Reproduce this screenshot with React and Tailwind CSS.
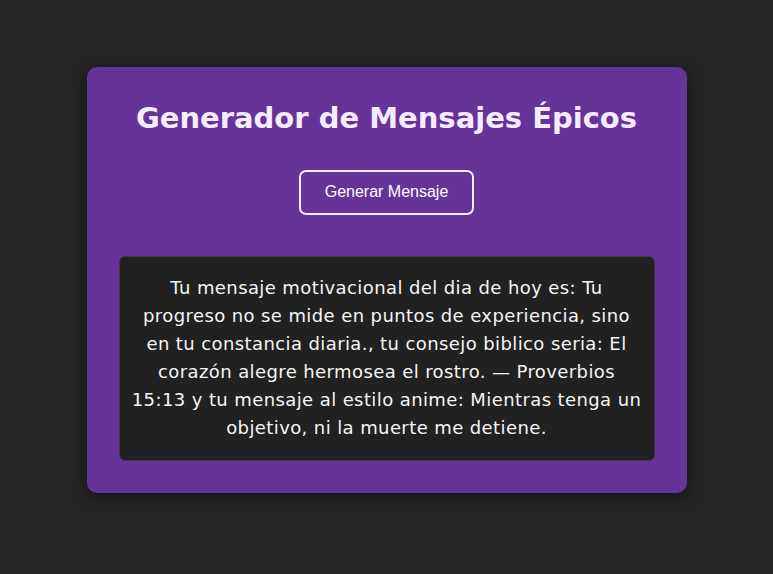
export default function App() {
  return (
    <div className="min-h-screen w-full bg-[#242424] flex justify-center pt-[67px]">
      <div className="w-[600px] h-[426px] bg-[#663399] rounded-[10px] shadow-[0_4px_16px_rgba(0,0,0,0.45)] p-8 flex flex-col items-center">
        <h1 className="text-[29px] leading-[38px] font-semibold text-[#f5ecff] text-center font-['DejaVu_Sans',sans-serif]">
          Generador de Mensajes Épicos
        </h1>
        <button className="mt-[33px] w-[175px] h-[45px] border-2 border-[#f5f0ff] rounded-[7px] text-white text-[16px] bg-transparent font-['Liberation_Sans',Arial,sans-serif]">
          Generar Mensaje
        </button>
        <div className="mt-[41px] w-[536px] h-[206px] bg-[#212121] rounded-[6px] border border-[#3a3a3a] px-3 flex items-center justify-center">
          <p className="text-[18px] leading-[28px] tracking-[0.4px] text-[#f5f5f5] text-center font-['DejaVu_Sans',sans-serif]">
            Tu mensaje motivacional del dia de hoy es: Tu progreso no se mide en puntos de experiencia, sino en tu constancia diaria., tu consejo biblico seria: El corazón alegre hermosea el rostro. — Proverbios 15:13 y tu mensaje al estilo anime: Mientras tenga un objetivo, ni la muerte me detiene.
          </p>
        </div>
      </div>
    </div>
  );
}
